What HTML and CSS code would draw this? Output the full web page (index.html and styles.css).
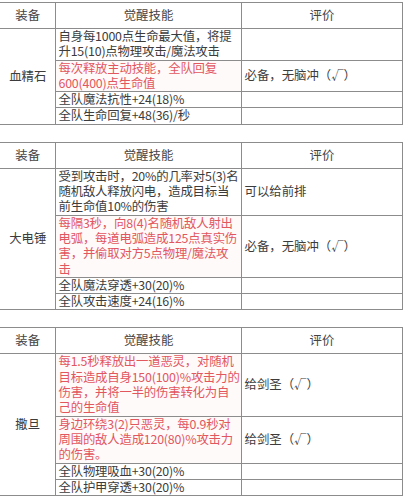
FILE: index.html
```html
<!DOCTYPE html>
<html lang="zh-CN">
<head>
<meta charset="utf-8">
<link rel="stylesheet" href="styles.css">
</head>
<body>
<div class="page">
<table class="eq">
  <colgroup><col class="c1"><col class="c2"><col class="c3"></colgroup>
  <tr class="head"><th class="name">装备</th><th>觉醒技能</th><th>评价</th></tr>
  <tr><td class="name" rowspan="4">血精石</td><td class="skill">自身每1000点生命最大值，将提<br>升15(10)点物理攻击/魔法攻击</td><td class="eval"></td></tr>
  <tr class="red"><td class="skill">每次释放主动技能，全队回复<br>600(400)点生命值</td><td class="eval">必备，无脑冲（√）</td></tr>
  <tr><td class="skill">全队魔法抗性+24(18)%</td><td class="eval"></td></tr>
  <tr><td class="skill">全队生命回复+48(36)/秒</td><td class="eval"></td></tr>
</table>

<table class="eq">
  <colgroup><col class="c1"><col class="c2"><col class="c3"></colgroup>
  <tr class="head"><th class="name">装备</th><th>觉醒技能</th><th>评价</th></tr>
  <tr><td class="name" rowspan="4">大电锤</td><td class="skill">受到攻击时，20%的几率对5(3)名<br>随机敌人释放闪电，造成目标当<br>前生命值10%的伤害</td><td class="eval">可以给前排</td></tr>
  <tr class="red"><td class="skill">每隔3秒，向8(4)名随机敌人射出<br>电弧，每道电弧造成125点真实伤<br>害，并偷取对方5点物理/魔法攻<br>击</td><td class="eval">必备，无脑冲（√）</td></tr>
  <tr><td class="skill">全队魔法穿透+30(20)%</td><td class="eval"></td></tr>
  <tr><td class="skill">全队攻击速度+24(16)%</td><td class="eval"></td></tr>
</table>

<table class="eq">
  <colgroup><col class="c1"><col class="c2"><col class="c3"></colgroup>
  <tr class="head"><th class="name">装备</th><th>觉醒技能</th><th>评价</th></tr>
  <tr class="red"><td class="name" rowspan="4">撒旦</td><td class="skill">每1.5秒释放出一道恶灵，对随机<br>目标造成自身150(100)%攻击力的<br>伤害，并将一半的伤害转化为自<br>己的生命值</td><td class="eval">给剑圣（√）</td></tr>
  <tr class="red"><td class="skill">身边环绕3(2)只恶灵，每0.9秒对<br>周围的敌人造成120(80)%攻击力<br>的伤害。</td><td class="eval">给剑圣（√）</td></tr>
  <tr><td class="skill">全队物理吸血+30(20)%</td><td class="eval"></td></tr>
  <tr><td class="skill">全队护甲穿透+30(20)%</td><td class="eval"></td></tr>
</table>
</div>
</body>
</html>
```
FILE: styles.css
```css
html, body {
  margin: 0;
  padding: 0;
  background: #ffffff;
}
.page {
  padding-top: 2px;
  display: flex;
  flex-direction: column;
  gap: 17px;
}
.eq {
  border-collapse: collapse;
  width: 402px;
  table-layout: fixed;
  font-family: "Noto Sans CJK SC", "Noto Sans", sans-serif;
  font-size: 12.4px;
  color: #3c3c3c;
}
.c1 { width: 55px; }
.c2 { width: 186px; }
.c3 { width: 161px; }
.eq th, .eq td {
  border: 1px solid #8c8c8c;
  padding: 0 2px 0 3px;
  line-height: 15.3px;
  font-weight: normal;
  white-space: nowrap;
  overflow: hidden;
}
.eq th.name, .eq td.name {
  border-left: none;
  text-align: center;
}
.head th {
  height: 25px;
  padding-top: 0;
  padding-bottom: 0;
  text-align: center;
  color: #444444;
}
.skill {
  text-align: left;
  letter-spacing: -0.2px;
}
.eval {
  text-align: left;
}
.red .skill {
  color: #e2565e;
  background: #fffafa;
}
```
